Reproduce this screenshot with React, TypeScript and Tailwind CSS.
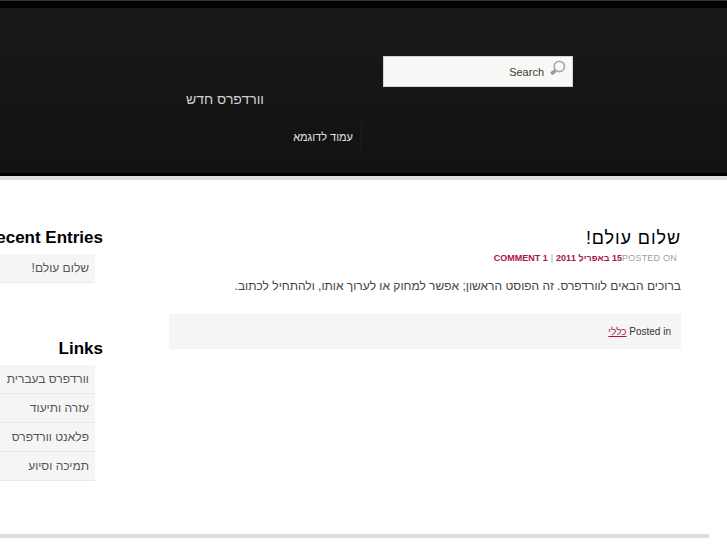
import React from 'react';

const recentEntries = ['שלום עולם!'];

const links = ['וורדפרס בעברית', 'עזרה ותיעוד', 'פלאנט וורדפרס', 'תמיכה וסיוע'];

function SearchIcon() {
    return (
        <svg viewBox="0 0 16 16" className="h-4 w-4" fill="none">
            <circle cx="9.3" cy="6.4" r="5.2" stroke="#a8a8a8" strokeWidth="1.6" />
            <path d="M5.6 10.2 L4 11.8" stroke="#9a9a9a" strokeWidth="2" />
            <path
                d="M4 11.8 L2.4 13"
                stroke="#9a9a9a"
                strokeWidth="3.6"
                strokeLinecap="round"
            />
        </svg>
    );
}

function Header() {
    return (
        <header className="border-b-4 border-[#dddddb]">
            <div className="flex h-44 flex-col border-t border-[#333] bg-linear-to-b from-[#191919] to-[#121212]">
                <div className="h-[7px] shrink-0 bg-black" />
                <div className="flex flex-1 flex-col pr-[154px] pt-12">
                    <form
                        className="flex h-[31px] w-[190px] items-center border border-[#d4d4d4] bg-[#f8f8f6] pr-1.5"
                        onSubmit={(e) => e.preventDefault()}
                    >
                        <button type="submit" aria-label="Search" className="mb-2">
                            <SearchIcon />
                        </button>
                        <input
                            type="text"
                            aria-label="Search"
                            defaultValue="Search"
                            className="min-w-0 flex-1 bg-transparent pr-1.5 text-[11px] leading-4 text-[#3d3d2e] outline-none"
                        />
                    </form>
                    <h1 className="pr-[309px] pt-0.5 text-[14px] leading-5 text-[#d0d0d0]">
                        <a href="#">וורדפרס חדש</a>
                    </h1>
                    <nav className="mt-3 flex pr-[211px]">
                        <a
                            href="#"
                            className="border-r border-[#1e1e1e] py-2 pr-2 text-[11px] leading-4 text-[#e4e4e4]"
                        >
                            עמוד לדוגמא
                        </a>
                    </nav>
                </div>
                <div className="h-[3px] shrink-0 bg-black" />
            </div>
        </header>
    );
}

function Post() {
    return (
        <article className="min-w-0 flex-1">
            <h2 className="text-[18px] leading-6 tracking-wider text-black">
                <a href="#">שלום עולם!</a>
            </h2>
            <div className="flex pr-1 text-[9px] leading-4 text-[#a0a0a0]">
                <span className="tracking-wide">POSTED ON</span>
                <a href="#" className="font-bold text-[#a8134a]">
                    15 באפריל 2011
                </a>
                <span className="px-[3px]">|</span>
                <a href="#" className="font-bold text-[#a8134a]">
                    1 COMMENT
                </a>
            </div>
            <p className="mt-3 text-[12px] leading-4 text-[#444]">
                ברוכים הבאים לוורדפרס. זה הפוסט הראשון; אפשר למחוק או לערוך אותו, ולהתחיל לכתוב.
            </p>
            <p className="mt-5 bg-[#f5f5f5] px-2.5 py-2.5 text-[10px] leading-[15px] text-[#333]">
                Posted in{' '}
                <a href="#" className="text-[#a8134a] underline">
                    כללי
                </a>
            </p>
        </article>
    );
}

function Widget({ title, items }: { title: string; items: string[] }) {
    return (
        <section>
            <h3 className="whitespace-nowrap text-[17px] font-bold leading-6 text-black">
                {title}
            </h3>
            <ul className="mr-2 mt-1">
                {items.map((item) => (
                    <li
                        key={item}
                        className="border-b border-dotted border-[#ddd] bg-[#f5f5f5] py-1.5 pr-1.5"
                    >
                        <a
                            href="#"
                            className="block whitespace-nowrap text-[12px] leading-4 text-[#555]"
                        >
                            {item}
                        </a>
                    </li>
                ))}
            </ul>
        </section>
    );
}

export default function App() {
    return (
        <div
            dir="rtl"
            lang="he"
            className="overflow-hidden bg-white font-['Liberation_Sans',Arial,sans-serif]"
        >
            <Header />
            <main className="flex gap-[66px] pr-[46px] pt-[46px]">
                <Post />
                <aside className="flex w-[103px] flex-col gap-[54px]">
                    <Widget title="Recent Entries" items={recentEntries} />
                    <Widget title="Links" items={links} />
                </aside>
            </main>
            <footer className="mr-[18px] mt-[53px] border-t-4 border-[#ddd]" />
        </div>
    );
}
